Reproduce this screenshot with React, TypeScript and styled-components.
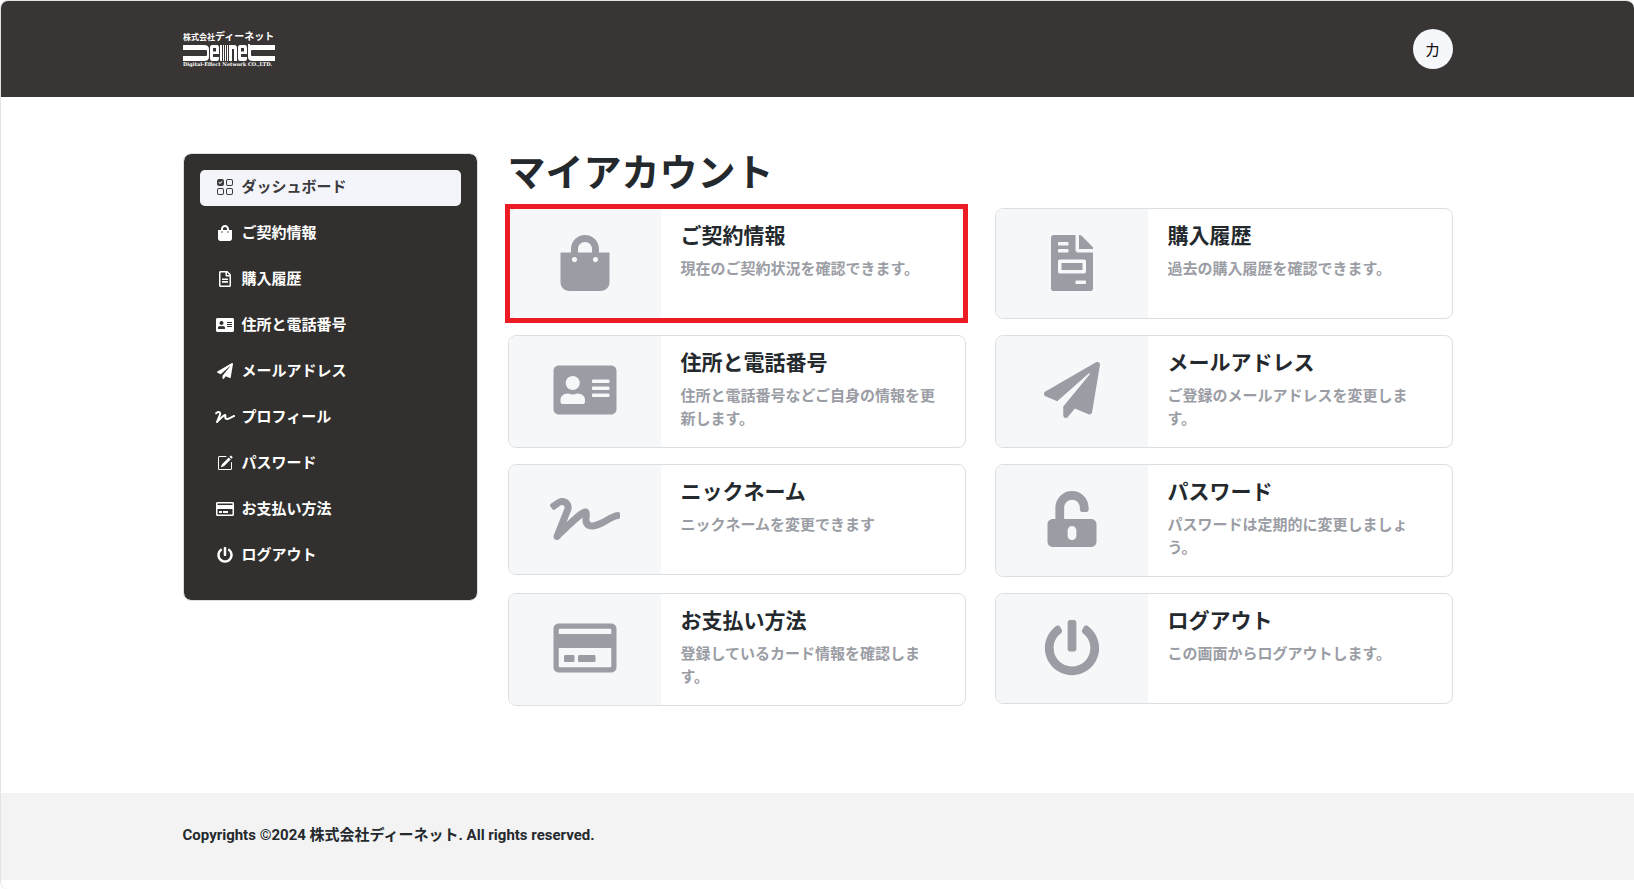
import React from "react";
import styled, { createGlobalStyle, css } from "styled-components";
import type { IconType } from "react-icons";
import {
  FaAddressCard,
  FaFileInvoice,
  FaPaperPlane,
  FaPowerOff,
  FaRegCreditCard,
  FaRegFileAlt,
  FaShoppingBag,
  FaSignature,
  FaUnlockAlt,
} from "react-icons/fa";
import { BsPencilSquare, BsUiChecksGrid } from "react-icons/bs";

const GlobalStyle = createGlobalStyle`
  *, *::before, *::after { box-sizing: border-box; }
  body {
    margin: 0;
    background: #fff;
    color: #24292d;
    font-family: Roboto, "Noto Sans CJK JP", sans-serif;
    font-size: 15px;
  }
`;

const Page = styled.div`
  display: flex;
  flex-direction: column;
  min-height: 100vh;
  padding-bottom: 9px;
  border: solid #e2e4e4;
  border-width: 1px 0 0 1px;
  border-radius: 8px;
  overflow: hidden;
`;

const Container = styled.div`
  width: 100%;
  max-width: 1270px;
  margin: 0 auto;
`;

const Header = styled.header`
  background: #393534;
`;

const HeaderRow = styled(Container)`
  display: flex;
  align-items: center;
  justify-content: space-between;
  height: 96px;
`;

const LogoLink = styled.a`
  display: block;
  height: 46px;
  color: #fff;
`;

const Avatar = styled.button`
  display: flex;
  align-items: center;
  justify-content: center;
  width: 40px;
  height: 40px;
  padding: 0;
  border: 0;
  border-radius: 50%;
  background: #f5f7fa;
  color: #111;
  font: 400 16px/24px "Noto Sans CJK JP", sans-serif;
  cursor: pointer;
`;

const Body = styled(Container)`
  display: grid;
  grid-template-columns: 295px minmax(0, 1fr);
  align-items: start;
  gap: 30px;
  flex: 1 0 auto;
  padding: 56px 0 80px;
`;

const Sidebar = styled.nav`
  padding: 16px;
  border: 1px solid #dcdfe0;
  border-radius: 8px;
  background: #31302e;
  background-clip: padding-box;
`;

const NavList = styled.ul`
  margin: 0;
  padding: 0;
  list-style: none;
`;

const NavItem = styled.li`
  padding-bottom: 10px;
`;

const NavLink = styled.a<{ $active?: boolean }>`
  display: flex;
  align-items: center;
  gap: 8px;
  height: 36px;
  padding: 0 16px 2px;
  border-radius: 5px;
  color: #fff;
  font-weight: 700;
  line-height: 24px;
  text-decoration: none;
  ${(p) =>
    p.$active &&
    css`
      background: #f4f5fa;
      color: #3b3a3c;
    `}
`;

const NavIcon = styled.span`
  display: flex;
  justify-content: center;
  flex: 0 0 18px;
  min-width: 0;

  svg {
    flex: none;
    width: 20px;
    height: 16px;
  }
`;

const Title = styled.h1`
  margin: 0 0 15px;
  font-size: 38px;
  font-weight: 700;
  line-height: 40px;
`;

const CardGrid = styled.div`
  display: grid;
  grid-template-columns: repeat(2, minmax(0, 1fr));
  align-items: start;
  gap: 16px 29px;
`;

const Card = styled.a<{ $highlighted?: boolean }>`
  position: relative;
  display: grid;
  grid-template-columns: 1fr 2fr;
  min-height: 111px;
  border: 1px solid #dcdfe2;
  border-radius: 8px;
  background: #fff;
  color: inherit;
  text-decoration: none;
  ${(p) =>
    p.$highlighted &&
    css`
      &::after {
        content: "";
        position: absolute;
        inset: -5px -3px -5px -4px;
        border: 5px solid #ed1c24;
      }
    `}
`;

const CardIcon = styled.span`
  display: flex;
  align-items: flex-start;
  justify-content: center;
  padding-top: 26px;
  border-radius: 7px 0 0 7px;
  background: #f5f7f9;
  color: #9b9da5;

  svg {
    width: 72px;
    height: 56px;
  }
`;

const CardText = styled.div`
  padding: 14px 20px 16px;
`;

const CardTitle = styled.h2`
  margin: 0 0 9px;
  font-size: 21px;
  font-weight: 700;
  line-height: 26px;
`;

const CardNote = styled.p`
  margin: 0;
  color: #9b9da5;
  font-weight: 700;
  line-height: 23px;
`;

const Footer = styled.footer`
  padding: 30px 0 33px;
  background: #f3f3f3;
  font-weight: 700;
  line-height: 24px;
`;

interface NavEntry {
  label: string;
  icon: IconType;
  active?: boolean;
}

const navEntries: NavEntry[] = [
  { label: "ダッシュボード", icon: BsUiChecksGrid, active: true },
  { label: "ご契約情報", icon: FaShoppingBag },
  { label: "購入履歴", icon: FaRegFileAlt },
  { label: "住所と電話番号", icon: FaAddressCard },
  { label: "メールアドレス", icon: FaPaperPlane },
  { label: "プロフィール", icon: FaSignature },
  { label: "パスワード", icon: BsPencilSquare },
  { label: "お支払い方法", icon: FaRegCreditCard },
  { label: "ログアウト", icon: FaPowerOff },
];

interface CardEntry {
  title: string;
  note: string;
  icon: IconType;
  highlighted?: boolean;
}

const cardEntries: CardEntry[] = [
  { title: "ご契約情報", note: "現在のご契約状況を確認できます。", icon: FaShoppingBag, highlighted: true },
  { title: "購入履歴", note: "過去の購入履歴を確認できます。", icon: FaFileInvoice },
  { title: "住所と電話番号", note: "住所と電話番号などご自身の情報を更新します。", icon: FaAddressCard },
  { title: "メールアドレス", note: "ご登録のメールアドレスを変更します。", icon: FaPaperPlane },
  { title: "ニックネーム", note: "ニックネームを変更できます", icon: FaSignature },
  { title: "パスワード", note: "パスワードは定期的に変更しましょう。", icon: FaUnlockAlt },
  { title: "お支払い方法", note: "登録しているカード情報を確認します。", icon: FaRegCreditCard },
  { title: "ログアウト", note: "この画面からログアウトします。", icon: FaPowerOff },
];

function Logo() {
  return (
    <svg width="96" height="46" viewBox="0 -4 96 46" fill="currentColor" role="img" aria-label="株式会社ディーネット">
      <text x="0" y="10" fontWeight="700" fontFamily='"Noto Sans CJK JP", sans-serif'>
        <tspan fontSize="8">株式会社</tspan>
        <tspan fontSize="10">ディーネット</tspan>
      </text>
      <g transform="translate(0 1)">
        {/* left wing */}
        <path d="M0 14H21Q26 14 26 18V26Q26 30 21 30H0V25H23Q24 25 24 24V20Q24 19 23 19H0Z" />
        {/* centre blocks and stripes */}
        <path fillRule="evenodd" d="M29 14H34Q36 14 36 17V23H30V26H36V27.500Q36 30 34 30H29Q27 30 27 27V17Q27 14 29 14ZM30 17V20.500H33V17Z" />
        <path d="M37 14h2v16h-2zM40 14h1v16h-1zM42 14h1v16h-1zM44 14h1v16h-1z" />
        <path d="M46 14H51Q54 14 54 17V30H51V18H49V30H46Z" />
        <path fillRule="evenodd" d="M57 14H62Q64 14 64 17V23H58V26H64V27.500Q64 30 62 30H57Q55 30 55 27V17Q55 14 57 14ZM58 17V20.500H61V17Z" />
        {/* right wing */}
        <path d="M65 13H67V14H92V19H69Q68 19 68 20V24Q68 25 69 25H92V30H70Q65 30 65 26Z" />
      </g>
      <text x="0" y="36" fontSize="5" fontWeight="700" fontFamily='"DejaVu Serif", serif'>
        Digital-Effect Network CO.,LTD.
      </text>
    </svg>
  );
}

export default function App() {
  return (
    <>
      <GlobalStyle />
      <Page>
        <Header>
          <HeaderRow>
            <LogoLink href="#">
              <Logo />
            </LogoLink>
            <Avatar type="button">カ</Avatar>
          </HeaderRow>
        </Header>
        <Body>
          <Sidebar>
            <NavList>
              {navEntries.map(({ label, icon: Icon, active }) => (
                <NavItem key={label}>
                  <NavLink href="#" $active={active} aria-current={active ? "page" : undefined}>
                    <NavIcon>
                      <Icon aria-hidden />
                    </NavIcon>
                    {label}
                  </NavLink>
                </NavItem>
              ))}
            </NavList>
          </Sidebar>
          <main>
            <Title>マイアカウント</Title>
            <CardGrid>
              {cardEntries.map(({ title, note, icon: Icon, highlighted }) => (
                <Card key={title} href="#" $highlighted={highlighted}>
                  <CardIcon>
                    <Icon aria-hidden />
                  </CardIcon>
                  <CardText>
                    <CardTitle>{title}</CardTitle>
                    <CardNote>{note}</CardNote>
                  </CardText>
                </Card>
              ))}
            </CardGrid>
          </main>
        </Body>
        <Footer>
          <Container>Copyrights ©2024 株式会社ディーネット. All rights reserved.</Container>
        </Footer>
      </Page>
    </>
  );
}
